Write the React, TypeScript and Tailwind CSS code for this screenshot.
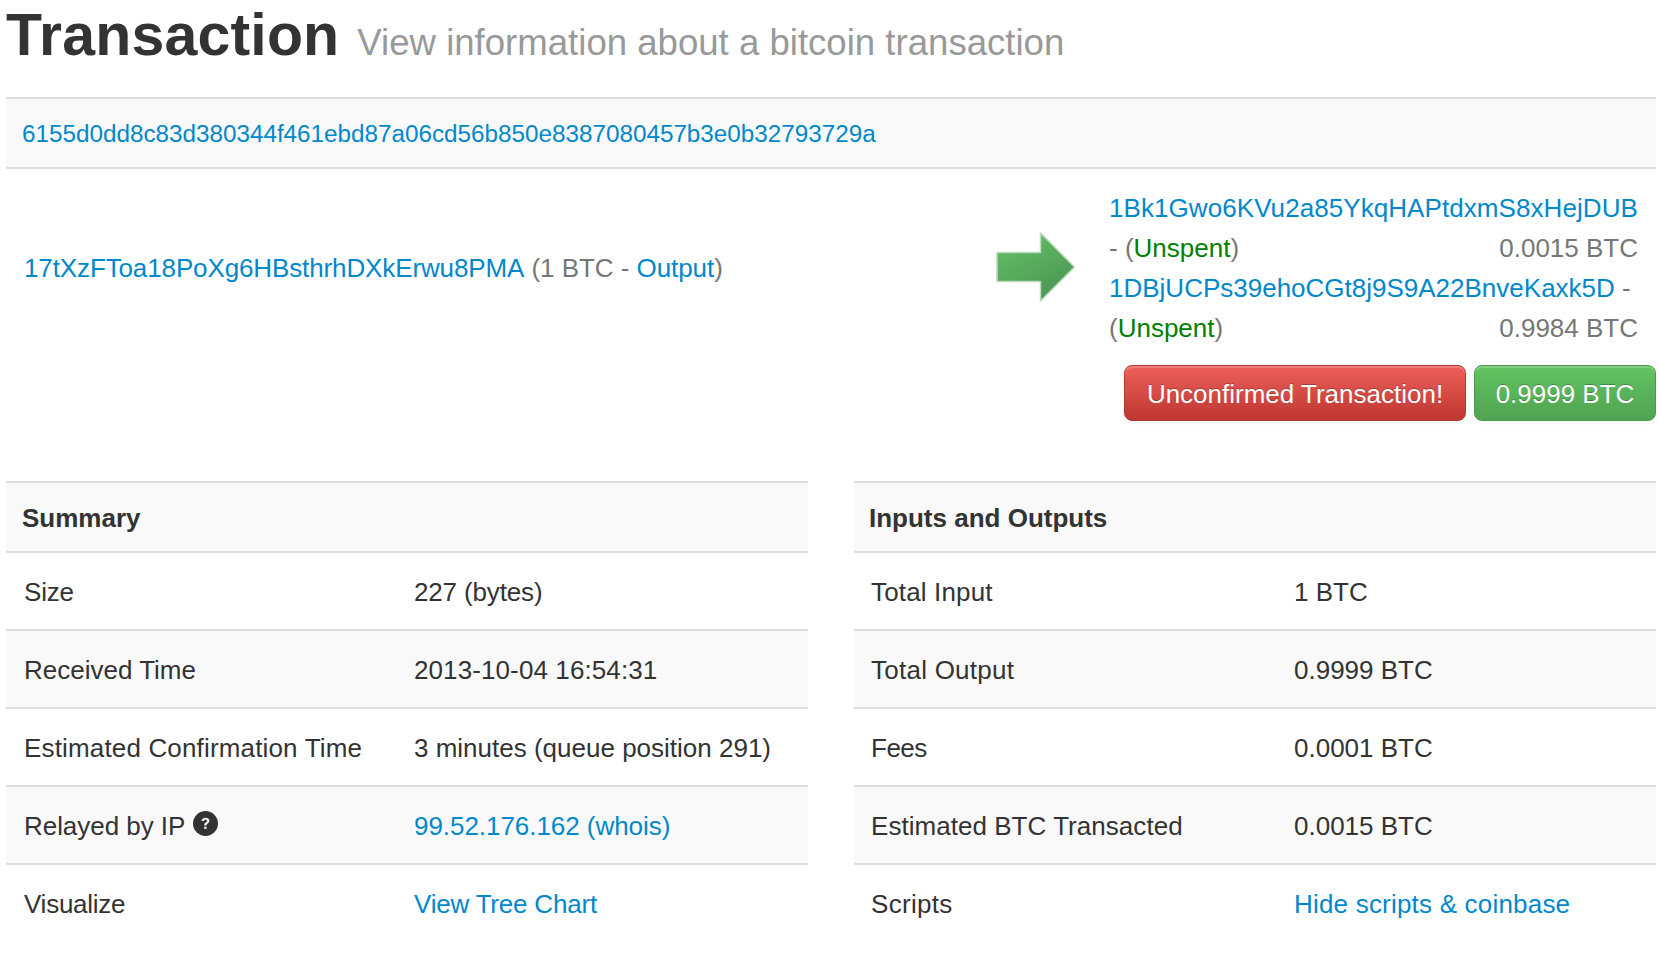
type Row = { label: string; value: string; link?: boolean; help?: boolean; labelFit?: string; valueFit?: string };

const rowsLeft: Row[] = [
  { label: "Size", value: "227 (bytes)", labelFit: "tracking-[-0.2px]", valueFit: "tracking-[-0.15px]" },
  { label: "Received Time", value: "2013-10-04 16:54:31", valueFit: "tracking-[0.1px]" },
  { label: "Estimated Confirmation Time", value: "3 minutes (queue position 291)", labelFit: "tracking-[0.16px]" },
  { label: "Relayed by IP", value: "99.52.176.162 (whois)", link: true, help: true, labelFit: "tracking-[-0.05px]", valueFit: "tracking-[-0.05px]" },
  { label: "Visualize", value: "View Tree Chart", link: true, labelFit: "tracking-[-0.25px]", valueFit: "tracking-[-0.2px]" },
];

const rowsRight: Row[] = [
  { label: "Total Input", value: "1 BTC", labelFit: "tracking-[0.15px]" },
  { label: "Total Output", value: "0.9999 BTC", labelFit: "tracking-[0.25px]" },
  { label: "Fees", value: "0.0001 BTC", labelFit: "tracking-[-0.5px]" },
  { label: "Estimated BTC Transacted", value: "0.0015 BTC", labelFit: "tracking-[0.04px]" },
  { label: "Scripts", value: "Hide scripts & coinbase", link: true, labelFit: "tracking-[0.3px]", valueFit: "tracking-[0.2px]" },
];

function InfoTable({ title, rows, labelWidth, titlePad, rowPad }: { title: string; rows: Row[]; labelWidth: string; titlePad: string; rowPad: string }) {
  return (
    <div className="flex-1 border-t-2 border-[#ddd]">
      <div className={`h-[70px] flex items-center pt-px ${titlePad} bg-[#f9f9f9] border-b-2 border-[#ddd] font-bold`}>{title}</div>
      {rows.map((row, i) => (
        <div
          key={row.label}
          className={`h-[78px] flex items-center ${rowPad} ${i % 2 === 1 ? "bg-[#f9f9f9]" : ""} ${i < rows.length - 1 ? "border-b-2 border-[#ddd] pt-px" : "pb-px"}`}
        >
          <div className={`${labelWidth} flex items-center flex-none ${row.labelFit ?? ""}`}>
            {row.label}
            {row.help && (
              <svg viewBox="0 0 24 24" className="w-[25px] h-[25px] ml-[8px] -mt-[5px]">
                <circle cx="12" cy="12" r="12" fill="#333" />
                <path d="M8.2 9.6c0-2 1.7-3.2 3.8-3.2s3.8 1.1 3.8 3c0 2.5-2.8 2.6-2.8 4.4h-2.2c0-3 2.7-3 2.7-4.4 0-.7-.6-1.1-1.5-1.1s-1.5.6-1.5 1.3z" fill="#f4f4f4" />
                <rect x="10.8" y="15" width="2.2" height="2.2" fill="#f4f4f4" />
              </svg>
            )}
          </div>
          <div className={`${row.link ? "text-[#0088cc]" : ""} ${row.valueFit ?? ""}`}>{row.value}</div>
        </div>
      ))}
    </div>
  );
}

export default function App() {
  return (
    <div className="w-[1660px] h-[970px] overflow-hidden bg-white pl-[6px] pr-[4px] text-[#333] text-[26px] leading-[40px] font-['Liberation_Sans',Arial,sans-serif]">
      <div className="h-[97px] flex items-start">
        <h1 className="text-[59px] leading-[70px] font-bold tracking-[0.2px]">Transaction</h1>
        <span className="ml-[18px] mt-[18px] text-[36.6px] leading-[50px] text-[#999]">View information about a bitcoin transaction</span>
      </div>

      <div className="h-[72px] flex items-center px-4 pt-px bg-[#f9f9f9] border-y-2 border-[#ddd] text-[#0088cc] text-[24.25px]">
        6155d0dd8c83d380344f461ebd87a06cd56b850e8387080457b3e0b32793729a
      </div>

      <div className="flex items-start h-[312px]">
        <div className="flex-1 h-[185px] flex items-center pl-[18px] pt-[12px] text-[#777]">
          <span className="tracking-[-0.05px]">
            <span className="text-[#0088cc] tracking-[-0.12px]">17tXzFToa18PoXg6HBsthrhDXkErwu8PMA</span> (1 BTC - <span className="text-[#0088cc]">Output</span>)
          </span>
        </div>
        {/* arrow between inputs and outputs */}
        <svg viewBox="0 0 80 70" className="w-[80px] h-[70px] mt-[63px] mr-[33px] flex-none">
          <defs>
            <linearGradient id="arrow" x1="0" y1="0" x2="0.6" y2="1">
              <stop offset="0" stopColor="#66c268" />
              <stop offset="1" stopColor="#4c9753" />
            </linearGradient>
          </defs>
          <path d="M1 20.5H44.5V1L78.5 35 44.5 69V49.5H1z" fill="url(#arrow)" stroke="#bcdcbe" strokeWidth="1.5" strokeLinejoin="round" />
        </svg>
        <div className="w-[547px] flex-none">
          <div className="w-[529px] pt-[19px] text-[#777]">
            <span className="text-[#0088cc] tracking-[0.07px]">1Bk1Gwo6KVu2a85YkqHAPtdxmS8xHejDUB</span> - (<span className="text-[#008000]">Unspent</span>)
            <span className="float-right">0.0015 BTC</span>
            <br />
            <span className="text-[#0088cc]">1DBjUCPs39ehoCGt8j9S9A22BnveKaxk5D</span> - (<span className="text-[#008000]">Unspent</span>)
            <span className="float-right">0.9984 BTC</span>
          </div>
          <div className="flex justify-end gap-2 mt-[17px]">
            <div className="h-[56px] w-[342px] flex items-center justify-center pt-px rounded-lg border border-[#b33a33] bg-gradient-to-b from-[#ee5f5b] to-[#bd362f] text-white [text-shadow:0_-1px_0_rgba(0,0,0,0.25)] shadow-[inset_0_2px_0_rgba(255,255,255,0.2),0_2px_4px_rgba(0,0,0,0.05)]">
              Unconfirmed Transaction!
            </div>
            <div className="h-[56px] w-[182px] flex items-center justify-center pt-px rounded-lg border border-[#4a9a4a] bg-gradient-to-b from-[#62c462] to-[#51a351] text-white [text-shadow:0_-1px_0_rgba(0,0,0,0.25)] shadow-[inset_0_2px_0_rgba(255,255,255,0.2),0_2px_4px_rgba(0,0,0,0.05)]">
              0.9999 BTC
            </div>
          </div>
        </div>
      </div>

      <div className="flex gap-[46px]">
        <InfoTable title="Summary" rows={rowsLeft} labelWidth="w-[390px]" titlePad="px-4" rowPad="pl-[18px]" />
        <InfoTable title="Inputs and Outputs" rows={rowsRight} labelWidth="w-[423px]" titlePad="px-[15px]" rowPad="pl-[17px]" />
      </div>
    </div>
  );
}
